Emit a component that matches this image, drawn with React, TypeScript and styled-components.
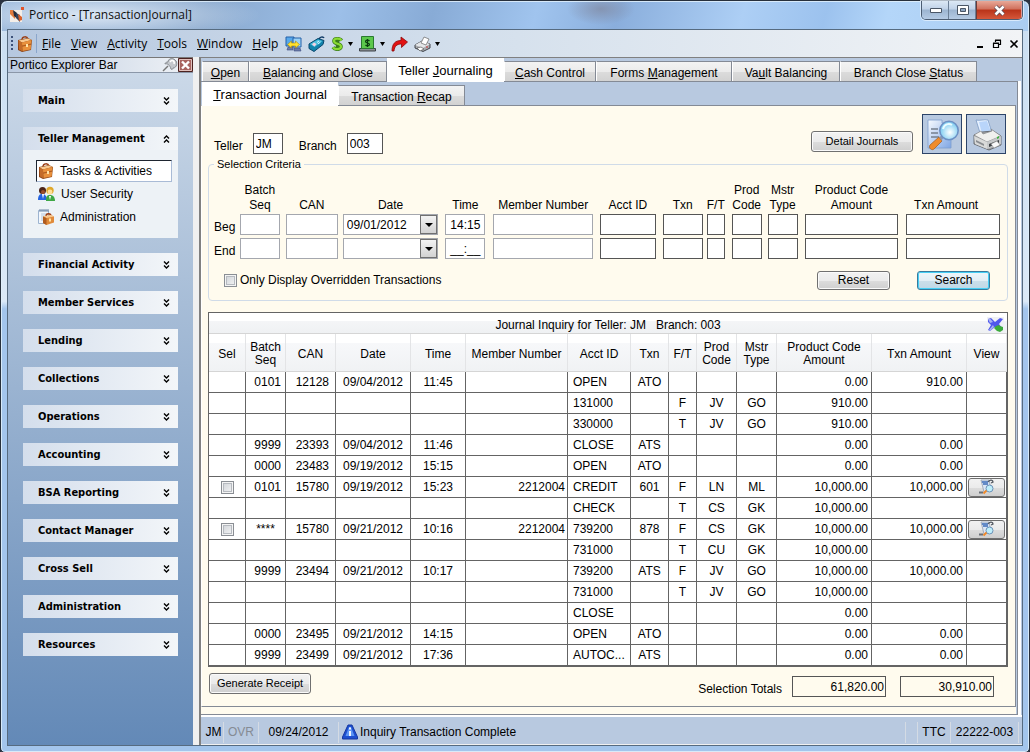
import React from "react";
import styled, { createGlobalStyle, css } from "styled-components";

const c = {
  steel: "#b8c9e0",
  cream: "#fffbee",
  edge: "#848a95",
  grid: "#646464",
  ink: "#000000",
};

const GlobalStyle = createGlobalStyle`
  * { box-sizing: border-box; }
  body { margin: 0; background: #2a3240; color: ${c.ink}; font-family: "Liberation Sans", Arial, sans-serif; font-size: 12px; line-height: 15px; }
  button, input, select { font: inherit; color: inherit; margin: 0; }
  svg { display: block; flex: none; }
`;

/* ---------- window frame ---------- */

const Frame = styled.div`
  min-height: 100vh;
  min-width: 960px;
  display: flex;
  flex-direction: column;
  padding: 0 6px 6px;
  border: 1px solid #27303c;
  border-radius: 7px 7px 5px 5px;
  background:
    radial-gradient(ellipse 170px 26px at 90px 14px, rgba(228, 237, 247, 0.9), rgba(228, 237, 247, 0) 100%) 0 0 / 100% 40px no-repeat,
    radial-gradient(ellipse 34px 16px at 600px 8px, rgba(128, 136, 160, 0.7), rgba(128, 136, 160, 0)) 0 0 / 100% 30px no-repeat,
    linear-gradient(105deg, #8fb0d6 0, #8aa9ce 200px, #9cbfe8 330px, #88abd6 420px, #a0c4ee 520px, #8aaedc 600px, #adcff5 720px, #9cc2ee 800px, #b4d6f9 860px, #a9cbf0 1020px) 0 0 / 100% 30px no-repeat,
    linear-gradient(#c9def2, #dbe9f7 40%, #a3c5ec 41%, #a3c5ec 100%);
  box-shadow: inset 0 0 0 1px rgba(225, 240, 252, 0.85);
`;

const TitleBar = styled.header`
  display: flex;
  height: 28px;
  align-items: center;
  padding-left: 2px;
  gap: 4px;
`;

const Title = styled.h1`
  margin: 0;
  flex: 1;
  font: 400 12px/16px "Open Sans", "Noto Sans", sans-serif;
  color: #101010;
`;

const Captions = styled.div`
  display: flex;
  align-self: flex-start;
  border: 1px solid #4c5d72;
  border-top: 0;
  border-radius: 0 0 5px 5px;
  overflow: hidden;
  box-shadow: 0 0 0 1px rgba(235, 245, 255, 0.7);
`;

const CaptionButton = styled.button<{ $close?: boolean }>`
  width: ${(p) => (p.$close ? 46 : 27)}px;
  height: 18px;
  padding: 0;
  border: 0;
  border-left: ${(p) => (p.$close ? "1px solid #6b3b38" : "0")};
  box-shadow: inset -1px 0 0 ${(p) => (p.$close ? "#d99" : "#6c7f96")};
  display: grid;
  place-items: center;
  background: ${(p) =>
    p.$close
      ? "linear-gradient(#e8a898 0, #d0705c 45%, #b93319 50%, #d5573a 100%)"
      : "linear-gradient(#dce8f5 0, #c0d2e8 45%, #9cb4d0 50%, #b5cbe4 100%)"};
`;

const Client = styled.div`
  flex: 1;
  display: flex;
  flex-direction: column;
  border: 1px solid #566b80;
  background: #f0f0f0;
`;

/* ---------- menu strip ---------- */

const MenuStrip = styled.nav`
  height: 27px;
  display: flex;
  align-items: center;
  padding: 0 3px 0 3px;
  background: linear-gradient(90deg, #b6c8e0, #d3dfec 45%, #f2f4f6);
  font-family: "Open Sans", "Noto Sans", sans-serif;
`;

const Grip = styled.span`
  width: 2px;
  height: 16px;
  margin-right: 4px;
  background: repeating-linear-gradient(#3c5078 0 2px, transparent 2px 4px);
`;

const MenuDivider = styled.span`
  width: 1px;
  height: 19px;
  margin-left: 3px;
  background: #8ba6cb;
`;

const MenuButton = styled.button`
  border: 0;
  background: none;
  padding: 0 5px;
  line-height: 20px;
`;

const Tools = styled.div`
  display: flex;
  align-items: center;
  gap: 6px;
  margin-left: 2px;
`;

const ToolButton = styled.button`
  display: flex;
  align-items: center;
  gap: 4px;
  padding: 0;
  border: 0;
  background: none;
`;

const ChildControls = styled.div`
  display: flex;
  gap: 7px;
  margin-left: auto;
`;

const ChildButton = styled.button`
  padding: 0;
  border: 0;
  background: none;
`;

/* ---------- explorer sidebar ---------- */

const Body = styled.div`
  flex: 1;
  display: grid;
  grid-template-columns: 185px minmax(0, 1fr);
  column-gap: 6px;
`;

const Sidebar = styled.aside`
  display: flex;
  flex-direction: column;
  background: linear-gradient(#cddae9, #6389b7);
`;

const SidebarHeader = styled.div`
  display: flex;
  align-items: center;
  height: 16px;
  padding-left: 2px;
  border-top: 1px solid #777;
  border-bottom: 1px solid #8b97a8;
  background: linear-gradient(90deg, #bccbe0, #eff2f6);
`;

const SidebarTitle = styled.h2`
  flex: 1;
  margin: 0;
  font-size: 12px;
  font-weight: 400;
`;

const IconButton = styled.button`
  padding: 0;
  border: 0;
  background: none;
`;

const Groups = styled.div`
  display: flex;
  flex-direction: column;
  gap: 15px;
  padding: 16px 15px 24px;
`;

const GroupHead = styled.button`
  width: 100%;
  height: 23px;
  display: flex;
  align-items: center;
  justify-content: space-between;
  padding: 0 8px 0 15px;
  border: 0;
  text-align: left;
  background: linear-gradient(90deg, #d4deec, #f3f6f9);
  font: 700 11px/15px "DejaVu Sans Condensed", "Noto Sans", sans-serif;
`;

const GroupBody = styled.div`
  display: flex;
  flex-direction: column;
  gap: 1px;
  padding: 10px 6px 10px 13px;
  background: #edf2f6;
`;

const GroupLink = styled.a<{ $on?: boolean }>`
  display: flex;
  align-items: center;
  gap: 6px;
  height: 22px;
  padding-left: 1px;
  border: 1px solid transparent;
  color: inherit;
  text-decoration: none;
  ${(p) =>
    p.$on &&
    css`
      background: #fff;
      border-color: #1e2530 #a9bbd6 #a9bbd6 #1e2530;
    `}
`;

/* ---------- tabs and panels ---------- */

const Main = styled.main`
  display: flex;
  flex-direction: column;
  border-left: 2px solid #808080;
  border-top: 1px solid #808080;
  background: ${c.steel};
`;

const TabList = styled.div`
  display: flex;
  align-items: flex-end;
  height: 23px;
  padding-left: 1px;
`;

const Tab = styled.button<{ $on?: boolean; $w: number }>`
  width: ${(p) => p.$w}px;
  height: ${(p) => (p.$on ? 24 : 20)}px;
  margin-bottom: ${(p) => (p.$on ? -1 : 0)}px;
  padding: ${(p) => (p.$on ? "0 0 1px" : "3px 0 0")};
  border: 1px solid ${(p) => (p.$on ? "#fff" : c.edge)};
  border-bottom: 0;
  border-left-color: #fff;
  white-space: nowrap;
  position: relative;
  font-size: ${(p) => (p.$on ? 13 : 12)}px;
  background: ${(p) => (p.$on ? "#fff" : "linear-gradient(#f3f3f3, #ebebeb 50%, #dcdcdc 51%, #d2d2d2)")};
`;

const OuterPanel = styled.section`
  flex: 1;
  display: flex;
  flex-direction: column;
  margin-right: 4px;
  padding-right: 1px;
  border: 1px solid ${c.edge};
  border-left: 0;
  box-shadow: 3px 0 0 #fff;
`;

const InnerPanel = styled.section`
  flex: 1;
  display: flex;
  flex-direction: column;
  padding: 8px 7px 9px 6px;
  border: 1px solid ${c.edge};
  border-left: 1px solid #fff;
  background: ${c.cream};
`;

const PanelSkirt = styled.div`
  height: 7px;
  background: ${c.cream};
`;

/* ---------- form ---------- */

const TopRow = styled.div`
  display: flex;
  align-items: center;
  height: 40px;
  padding: 0 2px 0 6px;
`;

const TopField = styled.label`
  display: flex;
  align-items: center;
  gap: 10px;
  margin: 19px 16px 0 0;
`;

const TopCaption = styled.span`
  padding-top: 6px;
`;

const field = css<{ $soft?: boolean }>`
  width: 100%;
  height: 21px;
  border: 1px solid ${(p) => (p.$soft ? "#a4a7ae" : "#555")};
  border-radius: 0;
  outline: 0;
  background: #fff;
`;

const TextBox = styled.input<{ $soft?: boolean; $w?: number; $center?: boolean }>`
  ${field}
  ${(p) => p.$w && `width: ${p.$w}px;`}
  padding: 0 ${(p) => (p.$center ? 0 : 2)}px;
  text-align: ${(p) => (p.$center ? "center" : "left")};
`;

const Push = styled.button<{ $w: number; $tall?: boolean; $default?: boolean }>`
  width: ${(p) => p.$w}px;
  height: ${(p) => (p.$tall ? 21 : 19)}px;
  padding: 0;
  white-space: nowrap;
  font-size: ${(p) => (p.$tall ? 11 : 12)}px;
  border: 1px solid ${(p) => (p.$default ? "#3a7a9c" : "#707070")};
  border-radius: 3px;
  box-shadow: inset 0 0 0 1px ${(p) => (p.$default ? "#46cff5" : "#fafafa")};
  background: ${(p) =>
    p.$default
      ? "linear-gradient(#eef6fa, #e2eef5 50%, #cbdfea 51%, #c0d8e6)"
      : "linear-gradient(#f2f2f2, #ebebeb 50%, #dddddd 51%, #cfcfcf)"};
`;

const TopActions = styled.div`
  display: flex;
  align-items: flex-end;
  gap: 4px;
  margin-left: auto;
`;

const DetailSlot = styled.div`
  padding: 0 5px 2px 0;
`;

const BigButton = styled.button`
  width: 40px;
  height: 40px;
  padding: 0;
  display: grid;
  place-items: center;
  border: 1px solid #2d4468;
  background: ${c.steel};
`;

const Criteria = styled.fieldset`
  min-width: 0;
  margin: 3px 0 0;
  padding: 13px 7px 10px 5px;
  border: 1px solid #d0dbe8;
  border-radius: 4px;
`;

const Legend = styled.legend`
  padding: 0 3px;
  font-size: 11px;
  line-height: 15px;
`;

const CriteriaGrid = styled.div`
  display: grid;
  grid-template-columns: 22px 42fr 53fr 99fr 44fr 103fr 59fr 40fr 19fr 32fr 33fr 98fr 94fr;
  row-gap: 3px;
  column-gap: 4px;
`;

const Head = styled.span<{ $trim: number }>`
  display: flex;
  align-items: flex-end;
  justify-content: center;
  height: 28px;
  margin: 0 ${(p) => p.$trim}px -2px 0;
  text-align: center;
  white-space: pre;
  line-height: 15px;
`;

const RowLabel = styled.span`
  align-self: end;
  white-space: nowrap;
`;

const Slot = styled.span<{ $trim: number }>`
  position: relative;
  padding-right: ${(p) => p.$trim}px;
  min-width: 0;
`;

const DateBox = styled.select<{ $soft?: boolean }>`
  ${field}
  appearance: none;
  padding: 2px 18px 0 3px;
`;

const DropMark = styled.span<{ $trim: number }>`
  position: absolute;
  top: 1px;
  right: ${(p) => p.$trim + 1}px;
  width: 17px;
  height: 19px;
  display: grid;
  place-items: center;
  pointer-events: none;
  border: 1px solid #707070;
  background: linear-gradient(#f3f3f3, #d2d2d2);
`;

const CriteriaFoot = styled.div`
  display: flex;
  align-items: center;
  margin-top: 12px;
  padding: 0 10px;
`;

const CheckLabel = styled.label`
  display: flex;
  align-items: center;
  gap: 3px;
`;

const Check = styled.input.attrs({ type: "checkbox" })`
  appearance: none;
  display: block;
  width: 13px;
  height: 13px;
  margin: 0;
  border: 1px solid #8a8e94;
  box-shadow: inset 0 0 0 1px #f4f4f4, inset 0 0 0 2px #b6bac0;
  background: linear-gradient(135deg, #cdd1d6, #f6f6f6);
`;

const FootButtons = styled.div`
  display: flex;
  gap: 27px;
  margin-left: auto;
`;

/* ---------- journal table ---------- */

const TableBox = styled.div`
  margin-top: 11px;
  border: 1px solid ${c.grid};
  background: #fff;
`;

const TableTitle = styled.div`
  position: relative;
  height: 21px;
  line-height: 24px;
  text-align: center;
  white-space: pre;
  border-bottom: 1px solid #d5d5d5;
  background: linear-gradient(#fff 40%, #f4f5f7 41%, #eff1f3);
`;

const CustomizeButton = styled.button`
  position: absolute;
  top: 4px;
  right: 3px;
  padding: 0;
  border: 0;
  background: #f0f1f4;
`;

const Journal = styled.table`
  width: 100%;
  table-layout: fixed;
  border-collapse: separate;
  border-spacing: 0;
`;

const Th = styled.th`
  height: 38px;
  padding: 3px 0 0;
  font-weight: 400;
  line-height: 13px;
  white-space: pre;
  border-right: 1px solid #e3e4e6;
  border-bottom: 1px solid #d5d5d5;
  background: linear-gradient(#fff 24%, #f7f8fa 25%, #f0f2f4);
`;

const Td = styled.td<{ $align: "left" | "center" | "right"; $pad: number }>`
  height: 21px;
  padding: 0 ${(p) => (p.$align === "center" ? 0 : p.$pad)}px;
  text-align: ${(p) => p.$align};
  overflow: hidden;
  white-space: nowrap;
  text-overflow: ellipsis;
  border-right: 1px solid ${c.grid};
  border-bottom: 1px solid ${c.grid};

  ${Check} { margin: 0 auto; }
`;

const ViewButton = styled.button`
  display: grid;
  place-items: center;
  width: 37px;
  height: 19px;
  margin: 0 auto;
  padding: 0;
  border: 1px solid #707070;
  border-radius: 3px;
  background: linear-gradient(#f2f2f2, #ebebeb 50%, #dddddd 51%, #cfcfcf);
`;

const Totals = styled.div`
  display: flex;
  align-items: flex-start;
  gap: 14px;
  margin-top: 6px;
  padding: 0 14px 0 1px;
`;

const TotalsLabel = styled.label`
  display: flex;
  align-items: flex-end;
  gap: 10px;
  margin: 3px 0 0 auto;
`;

const TotalBox = styled.input`
  ${field}
  width: 94px;
  padding: 0 1px 0 0;
  text-align: right;
  background: ${c.cream};
`;

const TotalSlot = styled.div`
  margin-top: 3px;
`;

/* ---------- status bar ---------- */

const Status = styled.footer`
  display: flex;
  align-items: center;
  height: 30px;
  padding: 3px 3px 0 3px;
  border-top: 2px solid #fff;
  border-bottom: 1px solid #f0f0f0;
`;

const StatusCell = styled.span<{ $w?: number; $dim?: boolean }>`
  display: flex;
  align-items: center;
  justify-content: center;
  height: 21px;
  ${(p) => p.$w && `width: ${p.$w}px;`}
  border-right: 1px solid #d4dbe4;
  color: ${(p) => (p.$dim ? "#858b94" : "inherit")};
`;

const StatusText = styled.span`
  flex: 1;
  display: flex;
  align-items: center;
  gap: 2px;
  height: 21px;
  padding-left: 3px;
  border-right: 1px solid #d4dbe4;
`;

/* ---------- drawings ---------- */

const AppLogo = () => (
  <svg width="16" height="16" viewBox="0 0 16 16">
    <path d="M1 3h12v12H1z" fill="#f3eee8" />
    <path d="M1 3h3l3 4-1 5-5-5z" fill="#e07a3c" />
    <path d="M4 3l4 3 1 6-4-3z" fill="#222c3c" />
    <path d="M7 6l4 2v7l-4-4z" fill="#33425a" />
    <path d="M9 7l4 3v3l-3 1z" fill="#d9612a" />
    <path d="M12 0h3v3h-3z" fill="#e2542b" />
  </svg>
);

const Briefcase = () => (
  <svg width="16" height="16" viewBox="0 0 16 16">
    <path d="M5 4c0-4 5-4 6-1" fill="none" stroke="#9a3d14" strokeWidth="1.500" />
    <path d="M1 4l10-2 4 2-1 10-9 2-4-2z" fill="#8e4415" />
    <path d="M1.500 4.500L11 2.500l3.500 1.500L5 6.500z" fill="#f8c890" />
    <path d="M5 6.500l9.500-2.500-.8 9.500L5.500 15z" fill="#e8903c" />
    <path d="M1.500 4.500L5 6.500V15l-3-1.500z" fill="#c46a28" />
    <path d="M5 9.500l9-2v1.200l-9 2z" fill="#b05c20" />
    <path d="M9 8h2v3H9z" fill="#ffe3a6" />
  </svg>
);

const Users = () => (
  <svg width="17" height="16" viewBox="0 0 17 16">
    <path d="M0 14c0-5 2-6 4-6s5 1 5 6z" fill="#2464e0" />
    <path d="M4 8h2l-1 5z" fill="#fff" />
    <circle cx="4.500" cy="4.500" r="3.500" fill="#4b2418" />
    <circle cx="5" cy="6" r="2" fill="#9c4e2c" />
    <path d="M8 15c0-5 1-6 4-6s5 2 5 6z" fill="#3fa845" />
    <circle cx="12" cy="4.500" r="3.700" fill="#e0a82c" />
    <circle cx="12" cy="6" r="2.400" fill="#ffdf98" />
    <path d="M11 10h2l-1 4z" fill="#fff" />
  </svg>
);

const AdminDoc = () => (
  <svg width="16" height="16" viewBox="0 0 16 16">
    <path d="M.5 1.500h10v13H.5z" fill="#f2f7fd" stroke="#9db4d0" />
    <path d="M2 0v3M4 0v3M6 0v3M8 0v3M10 0v3" stroke="#6f87a6" />
    <path d="M3 5h6M3 7h4M3 9h3M3 11h2" stroke="#b4c6dc" />
    <path d="M8 7c0-3 5-3 5 0" fill="none" stroke="#9a3d14" strokeWidth="1.300" />
    <path d="M5 7.500l8-1.500 3 1.500v6L8.500 16 5 14z" fill="#e08a3a" />
    <path d="M5 7.500L13 6l3 1.500L8.500 9z" fill="#f8c890" />
    <path d="M5 7.500L8.500 9v7L5 14z" fill="#b05c20" />
    <path d="M11 9.500h2v3h-2z" fill="#ffe3a6" />
  </svg>
);

const Screens = () => (
  <svg width="17" height="16" viewBox="0 0 17 16">
    <path d="M1 1h8v9H1z" fill="#58a8ea" stroke="#2460a8" />
    <path d="M8 2h8v9H8z" fill="#9cd2f6" stroke="#2460a8" />
    <path d="M3 11h5v3H2zM9 12h6l1 3H9z" fill="#6c7ca8" stroke="#3c4c80" strokeWidth=".6" />
    <path d="M2.500 8.500L6.500 5v2h4V5l4 3.500-4 3.500v-2h-4v2z" fill="#ffe22e" stroke="#a88410" strokeWidth=".6" />
  </svg>
);

const PhoneTag = () => (
  <svg width="17" height="16" viewBox="0 0 17 16">
    <path d="M11 4c0-3 4-4 5-2" fill="none" stroke="#123c66" strokeWidth="1.500" />
    <path d="M1 8l9-5.500 6 2-1 4-9 7-5-3z" fill="#1283ac" stroke="#0a466c" />
    <path d="M2 8l8-4.500 4.500 1.500L6.500 11z" fill="#4cc0de" />
    <path d="M4 8.500L6 6.500 8.500 8l-2 2.500z" fill="#f9cfe0" />
    <path d="M9 6.500l2-1.500M10 8l2.500-2" stroke="#d6f4ff" />
  </svg>
);

const Dollar = () => (
  <svg width="13" height="16" viewBox="0 0 13 16">
    <path d="M10.500 4.500C9 2 3 2 3 5c0 3.500 7 2 7 5.500 0 3-6 3.500-8 .8M6.500 1v14" fill="none" stroke="#3a7c1a" strokeWidth="3.600" />
    <path d="M10.500 4.500C9 2 3 2 3 5c0 3.500 7 2 7 5.500 0 3-6 3.500-8 .8" fill="none" stroke="#8cdc34" strokeWidth="2.200" />
  </svg>
);

const CashSlip = () => (
  <svg width="17" height="16" viewBox="0 0 17 16">
    <path d="M.5 12.500h16v2.500H.5z" fill="#8b9094" stroke="#3c4248" />
    <path d="M2.500.5h12v12h-12z" fill="#5cc84c" stroke="#2a7a30" />
    <path d="M10.500 5C9 3.500 6.500 4 6.500 5.500c0 2 4 1 4 3 0 1.600-3 1.700-4 .5M8.500 3v8" fill="none" stroke="#0b3c10" strokeWidth="1.200" />
  </svg>
);

const RedArrow = () => (
  <svg width="17" height="16" viewBox="0 0 17 16">
    <path d="M1 15C1 8 4 4.500 10 4.500V1l6.500 5-6 5.500V8C6 8 3.500 10 3 15z" fill="#e21212" stroke="#8d0909" strokeWidth=".8" />
  </svg>
);

const SmallPrinter = () => (
  <svg width="17" height="16" viewBox="0 0 17 16">
    <path d="M1 9l7-4 8 3v4l-7 3.500L1 12z" fill="#a9acb0" stroke="#33373c" strokeWidth=".9" />
    <path d="M1 9l7-4 8 3-7 4z" fill="#e4e6e8" />
    <path d="M7 7l3-6 5 2-3 6z" fill="#fff" stroke="#666" strokeWidth=".7" />
    <path d="M3 12l4-1 3 2-4 2z" fill="#fff" stroke="#444" strokeWidth=".6" />
    <path d="M12 11h2" stroke="#c33" />
  </svg>
);

const Caret = ({ w = 5 }: { w?: number }) => (
  <svg width={w} height="4" viewBox="0 0 8 4" preserveAspectRatio="none">
    <path d="M0 0h8L4 4z" fill="#000" />
  </svg>
);

const Chevrons = ({ up }: { up?: boolean }) => (
  <svg width="7" height="8" viewBox="0 0 7 8">
    <path
      d={up ? "M1 3.500L3.500 1 6 3.500M1 7.500L3.500 5 6 7.500" : "M1 .5L3.500 3 6 .5M1 4.500L3.500 7 6 4.500"}
      fill="none"
      stroke="#000"
      strokeWidth="1.400"
    />
  </svg>
);

const Pin = () => (
  <svg width="16" height="14" viewBox="0 0 16 14">
    <path d="M1 13l5-5" stroke="#777" strokeWidth="1.500" />
    <path d="M3 6c2-1 5 1 6 5 1 1 2 0 2-1 4 0 5-6 2-8C10-1 6 1 6 4 4 4 3 5 3 6z" fill="#c3c7cc" stroke="#85898e" />
    <path d="M8 4c2-3 5-1 4 2" fill="none" stroke="#fff" strokeWidth="1.500" />
  </svg>
);

const CloseBox = () => (
  <svg width="15" height="14" viewBox="0 0 15 14">
    <path d="M.5.5h14v13H.5z" fill="#a86460" stroke="#4c2220" />
    <path d="M1.500 1.500h12v11h-12z" fill="none" stroke="#e0c0bc" />
    <path d="M4 3.500l7 7M11 3.500l-7 7" stroke="#fff" strokeWidth="2.400" />
  </svg>
);

const FindDoc = () => (
  <svg width="34" height="34" viewBox="0 0 34 34">
    <defs>
      <linearGradient id="sheet" x2="1" y2="1">
        <stop stopColor="#f8fbff" />
        <stop offset="1" stopColor="#7fa6e4" />
      </linearGradient>
      <radialGradient id="lens" cx=".55" cy=".6">
        <stop stopColor="#ffffff" />
        <stop offset="1" stopColor="#86d0f2" />
      </radialGradient>
    </defs>
    <path d="M3 3h14v3h9v25H3z" fill="url(#sheet)" stroke="#7f9fce" strokeWidth=".8" />
    <path d="M6 12h7M6 16h7M6 20h8" stroke="#76808f" strokeWidth="1.500" />
    <path d="M14 20l3 4-8 8c-2 2-6-1-4-4z" fill="#f08c2c" stroke="#a4642c" strokeWidth=".8" />
    <path d="M14 20l3-1.500 1.500 2.500-2 2.500z" fill="#8c98b0" />
    <circle cx="24" cy="13.500" r="9.200" fill="url(#lens)" stroke="#6c90c4" strokeWidth="1.600" />
    <path d="M18 12c1-5 6-6 9-4" fill="none" stroke="#e9fbff" strokeWidth="2" />
  </svg>
);

const Printer = () => (
  <svg width="34" height="34" viewBox="0 0 34 34">
    <path d="M7 3c4 1 8-1 12 0l4 13-11 3z" fill="#e6f1ff" stroke="#7c9ac4" strokeWidth=".8" />
    <path d="M10 5l8-1 4 11-9 2z" fill="#b9d5fa" />
    <path d="M5 18l8-3 11-1 8 5v9l-12 5L5 27z" fill="#a6a8aa" stroke="#55585c" strokeWidth=".8" />
    <path d="M5 18l7-4 2 3 9-3-1-2 10 7-14 6z" fill="#f0f0ee" stroke="#77797c" strokeWidth=".6" />
    <path d="M5 19l13 6v7L6 27z" fill="#d9dad9" />
    <path d="M7 23l8 4v2l-8-4z" fill="#8a8d90" />
    <path d="M18 25l14-6v8l-14 5z" fill="#c6c8c9" />
    <path d="M20 27l10-4v3l-10 4z" fill="#3e4145" />
    <path d="M22 27l6-3 3 4-6 3z" fill="#fafafa" stroke="#888" strokeWidth=".5" />
    <path d="M28 20l2-1v2l-2 1z" fill="#3fae3f" />
  </svg>
);

const ViewGlyph = () => (
  <svg width="17" height="16" viewBox="0 0 17 16">
    <path d="M3 1h8l2 9-7 3z" fill="#dbe6f5" stroke="#8894a6" strokeWidth=".7" />
    <path d="M4 3h6M5 5h5" stroke="#3c6cb8" strokeWidth="1.400" />
    <path d="M10 3c2-3 5-2 5 0l-2 1" fill="none" stroke="#555b63" strokeWidth="1.300" />
    <circle cx="11.500" cy="9.500" r="3.500" fill="#bfeefa" stroke="#6c92b8" />
    <path d="M8.500 11.500l-3 3" stroke="#f08a2a" strokeWidth="2" />
    <path d="M1 13.500h4" stroke="#6a7078" strokeWidth="2" />
  </svg>
);

const Customize = () => (
  <svg width="17" height="16" viewBox="0 0 17 16">
    <path d="M1 2l3-1 4 4 5-4 3 1-4 5 3 4-3 2-4-3-5 4-2-1 3-5-3-3z" fill="#4f57ee" />
    <path d="M1 2l2-.5L6 5 3 6zM2 13l4-5 1 2-4 4z" fill="#a9b2f4" />
    <path d="M7 11l2-2 3-1 1 1 3 1v3l-3 2-3-1z" fill="#3cab3c" />
  </svg>
);

const InfoTriangle = () => (
  <svg width="16" height="16" viewBox="0 0 16 16">
    <path d="M6 1h4l5.500 12v2H.5v-2z" fill="#1d4fd0" stroke="#1739a0" />
    <path d="M7 3h2l3.500 9h-9z" fill="#5c95f5" />
    <path d="M8 3.500v2M8 7v5" stroke="#fff" strokeWidth="1.800" />
  </svg>
);

/* ---------- data ---------- */

/* text before the access key, the key itself, text after it */
type Key = [string, string, string];
const K = ({ k }: { k: Key }) => (
  <>
    {k[0]}
    <u>{k[1]}</u>
    {k[2]}
  </>
);

const menus: Key[] = [["", "F", "ile"], ["", "V", "iew"], ["", "A", "ctivity"], ["", "T", "ools"], ["", "W", "indow"], ["", "H", "elp"]];

const tools = [
  { name: "Workstation", Icon: Screens },
  { name: "Lookup", Icon: PhoneTag },
  { name: "Currency", Icon: Dollar, menu: true },
  { name: "Cash", Icon: CashSlip, menu: true },
  { name: "Forward", Icon: RedArrow },
  { name: "Print", Icon: SmallPrinter, menu: true },
];

const groups = [
  "Main", "Teller Management", "Financial Activity", "Member Services", "Lending", "Collections", "Operations",
  "Accounting", "BSA Reporting", "Contact Manager", "Cross Sell", "Administration", "Resources",
];

const tabs: { k: Key; w: number; on?: boolean }[] = [
  { k: ["", "O", "pen"], w: 47 },
  { k: ["", "B", "alancing and Close"], w: 138 },
  { k: ["Teller ", "J", "ournaling"], w: 117, on: true },
  { k: ["", "C", "ash Control"], w: 92 },
  { k: ["Forms ", "M", "anagement"], w: 136 },
  { k: ["Va", "u", "lt Balancing"], w: 108 },
  { k: ["Branch Close ", "S", "tatus"], w: 137 },
];

const criteria = [
  { label: "Batch\nSeq", trim: 2, soft: true },
  { label: "CAN", trim: 1, soft: true },
  { label: "Date", trim: 3, soft: true, date: true },
  { label: "Time", trim: 4, soft: true, time: true },
  { label: "Member Number", trim: 3, soft: true },
  { label: "Acct ID", trim: 3 },
  { label: "Txn", trim: 0 },
  { label: "F/T", trim: 3 },
  { label: "Prod\nCode", trim: 2 },
  { label: "Mstr\nType", trim: 3 },
  { label: "Product Code\nAmount", trim: 4 },
  { label: "Txn Amount", trim: 14 },
];

const columns: { label: string; w: number; align?: "left" | "right"; pad?: number }[] = [
  { label: "Sel", w: 37 },
  { label: "Batch\nSeq", w: 40, align: "right", pad: 4 },
  { label: "CAN", w: 50, align: "right", pad: 6 },
  { label: "Date", w: 75 },
  { label: "Time", w: 55 },
  { label: "Member Number", w: 102, align: "right", pad: 2 },
  { label: "Acct ID", w: 63, align: "left", pad: 5 },
  { label: "Txn", w: 38 },
  { label: "F/T", w: 28 },
  { label: "Prod\nCode", w: 40 },
  { label: "Mstr\nType", w: 40 },
  { label: "Product Code\nAmount", w: 95, align: "right", pad: 3 },
  { label: "Txn Amount", w: 95, align: "right", pad: 3 },
  { label: "View", w: 40 },
];

const rows = [
  "|0101|12128|09/04/2012|11:45||OPEN|ATO||||0.00|910.00|",
  "||||||131000||F|JV|GO|910.00||",
  "||||||330000||T|JV|GO|910.00||",
  "|9999|23393|09/04/2012|11:46||CLOSE|ATS||||0.00|0.00|",
  "|0000|23483|09/19/2012|15:15||OPEN|ATO||||0.00|0.00|",
  "x|0101|15780|09/19/2012|15:23|2212004|CREDIT|601|F|LN|ML|10,000.00|10,000.00|x",
  "||||||CHECK||T|CS|GK|10,000.00||",
  "x|****|15780|09/21/2012|10:16|2212004|739200|878|F|CS|GK|10,000.00|10,000.00|x",
  "||||||731000||T|CU|GK|10,000.00||",
  "|9999|23494|09/21/2012|10:17||739200|ATS|F|JV|GO|10,000.00|10,000.00|",
  "||||||731000||T|JV|GO|10,000.00||",
  "||||||CLOSE|||||0.00||",
  "|0000|23495|09/21/2012|14:15||OPEN|ATO||||0.00|0.00|",
  "|9999|23499|09/21/2012|17:36||AUTOC...|ATS||||0.00|0.00|",
].map((r) => r.split("|"));

const CriteriaRow = ({ label, date, time }: { label: string; date: string; time: string }) => (
  <>
    <RowLabel>{label}</RowLabel>
    {criteria.map((f) => {
      const name = `${label} ${f.label.replace("\n", " ")}`;
      return (
        <Slot key={f.label} $trim={f.label === "Txn Amount" ? 0 : f.trim}>
          {f.date ? (
            <>
              <DateBox $soft aria-label={name} defaultValue={date}>
                <option>{date}</option>
              </DateBox>
              <DropMark $trim={f.trim}>
                <Caret w={8} />
              </DropMark>
            </>
          ) : (
            <TextBox $soft={f.soft} $center={f.time} aria-label={name} defaultValue={f.time ? time : ""} />
          )}
        </Slot>
      );
    })}
  </>
);

export default function App() {
  return (
    <Frame>
      <GlobalStyle />
      <TitleBar>
        <AppLogo />
        <Title>Portico - [TransactionJournal]</Title>
        <Captions>
          <CaptionButton aria-label="Minimize">
            <svg width="12" height="5" viewBox="0 0 12 5">
              <path d="M.5.5h11v4H.5z" fill="#fff" stroke="#4a5666" />
            </svg>
          </CaptionButton>
          <CaptionButton aria-label="Maximize">
            <svg width="12" height="10" viewBox="0 0 12 10">
              <path d="M.5.5h11v9H.5z" fill="#fff" stroke="#4a5666" />
              <path d="M3.500 3.500h5v3h-5z" fill="#8fa6c2" stroke="#4a5666" />
            </svg>
          </CaptionButton>
          <CaptionButton $close aria-label="Close">
            <svg width="13" height="11" viewBox="0 0 13 11">
              <path d="M2.500 1.500l8 8M10.500 1.500l-8 8" stroke="#5b4a55" strokeWidth="4.200" />
              <path d="M2.500 1.500l8 8M10.500 1.500l-8 8" stroke="#fff" strokeWidth="2.600" />
            </svg>
          </CaptionButton>
        </Captions>
      </TitleBar>
      <Client>
        <MenuStrip>
          <Grip />
          <Briefcase />
          <MenuDivider />
          {menus.map((m) => (
            <MenuButton key={m[1]}>
              <K k={m} />
            </MenuButton>
          ))}
          <Tools>
            {tools.map(({ name, Icon, menu }) => (
              <ToolButton key={name} aria-label={name}>
                <Icon />
                {menu && <Caret />}
              </ToolButton>
            ))}
          </Tools>
          <ChildControls>
            <ChildButton aria-label="Minimize child">
              <svg width="10" height="10" viewBox="0 0 10 10">
                <path d="M2 7h6v2H2z" />
              </svg>
            </ChildButton>
            <ChildButton aria-label="Restore child">
              <svg width="10" height="10" viewBox="0 0 10 10">
                <path d="M3.500 3V1.500h5v4H7M3 1h6M1.500 4.500h5v4h-5zM1 4h6" fill="none" stroke="#000" strokeWidth="1.200" />
              </svg>
            </ChildButton>
            <ChildButton aria-label="Close child">
              <svg width="10" height="10" viewBox="0 0 10 10">
                <path d="M1.500 1.500l7 7M8.500 1.500l-7 7" stroke="#000" strokeWidth="1.600" />
              </svg>
            </ChildButton>
          </ChildControls>
        </MenuStrip>
        <Body>
          <Sidebar>
            <SidebarHeader>
              <SidebarTitle>Portico Explorer Bar</SidebarTitle>
              <IconButton aria-label="Pin">
                <Pin />
              </IconButton>
              <IconButton aria-label="Close explorer bar">
                <CloseBox />
              </IconButton>
            </SidebarHeader>
            <Groups>
              {groups.map((g) => {
                const open = g === "Teller Management";
                return (
                  <div key={g}>
                    <GroupHead aria-expanded={open}>
                      {g}
                      <Chevrons up={open} />
                    </GroupHead>
                    {open && (
                      <GroupBody>
                        <GroupLink $on href="#tasks">
                          <Briefcase />
                          Tasks &amp; Activities
                        </GroupLink>
                        <GroupLink href="#security">
                          <Users />
                          User Security
                        </GroupLink>
                        <GroupLink href="#administration">
                          <AdminDoc />
                          Administration
                        </GroupLink>
                      </GroupBody>
                    )}
                  </div>
                );
              })}
            </Groups>
          </Sidebar>
          <Main>
            <TabList role="tablist">
              {tabs.map((t) => (
                <Tab key={t.k.join("")} role="tab" aria-selected={!!t.on} $on={t.on} $w={t.w}>
                  <K k={t.k} />
                </Tab>
              ))}
            </TabList>
            <OuterPanel>
              <TabList role="tablist">
                <Tab role="tab" aria-selected $on $w={136}>
                  <K k={["", "T", "ransaction Journal"]} />
                </Tab>
                <Tab role="tab" aria-selected={false} $w={127}>
                  <K k={["Transaction ", "R", "ecap"]} />
                </Tab>
              </TabList>
              <InnerPanel>
                <TopRow>
                  <TopField>
                    <TopCaption>Teller</TopCaption>
                    <TextBox $w={30} defaultValue="JM" />
                  </TopField>
                  <TopField>
                    <TopCaption>Branch</TopCaption>
                    <TextBox $w={36} defaultValue="003" />
                  </TopField>
                  <TopActions>
                    <DetailSlot>
                      <Push $tall $w={102}>Detail Journals</Push>
                    </DetailSlot>
                    <BigButton aria-label="Preview">
                      <FindDoc />
                    </BigButton>
                    <BigButton aria-label="Print journal">
                      <Printer />
                    </BigButton>
                  </TopActions>
                </TopRow>
                <Criteria>
                  <Legend>Selection Criteria</Legend>
                  <CriteriaGrid>
                    <span />
                    {criteria.map((f) => (
                      <Head key={f.label} $trim={f.trim}>
                        {f.label}
                      </Head>
                    ))}
                    <CriteriaRow label="Beg" date="09/01/2012" time="14:15" />
                    <CriteriaRow label="End" date="" time="__:__" />
                  </CriteriaGrid>
                  <CriteriaFoot>
                    <CheckLabel>
                      <Check />
                      Only Display Overridden Transactions
                    </CheckLabel>
                    <FootButtons>
                      <Push $w={73}>Reset</Push>
                      <Push $w={73} $default>
                        Search
                      </Push>
                    </FootButtons>
                  </CriteriaFoot>
                </Criteria>
                <TableBox>
                  <TableTitle id="journal-title">
                    {"Journal Inquiry for Teller: JM   Branch: 003"}
                    <CustomizeButton aria-label="Customize">
                      <Customize />
                    </CustomizeButton>
                  </TableTitle>
                  <Journal aria-labelledby="journal-title">
                    <colgroup>
                      {columns.map((col) => (
                        <col key={col.label} width={col.w} />
                      ))}
                    </colgroup>
                    <thead>
                      <tr>
                        {columns.map((col) => (
                          <Th key={col.label}>{col.label}</Th>
                        ))}
                      </tr>
                    </thead>
                    <tbody>
                      {rows.map((r, i) => (
                        <tr key={i}>
                          {r.map((v, j) => (
                            <Td key={j} $align={v === "****" ? "center" : columns[j].align ?? "center"} $pad={columns[j].pad ?? 0}>
                              {v === "x" && j === 0 ? (
                                <Check aria-label={`Select row ${i + 1}`} />
                              ) : v === "x" ? (
                                <ViewButton aria-label={`View row ${i + 1}`}>
                                  <ViewGlyph />
                                </ViewButton>
                              ) : (
                                v
                              )}
                            </Td>
                          ))}
                        </tr>
                      ))}
                    </tbody>
                  </Journal>
                </TableBox>
                <Totals>
                  <Push $tall $w={102}>Generate Receipt</Push>
                  <TotalsLabel>
                    Selection Totals
                    <TotalBox readOnly value="61,820.00" />
                  </TotalsLabel>
                  <TotalSlot>
                    <TotalBox readOnly aria-label="Transaction total" value="30,910.00" />
                  </TotalSlot>
                </Totals>
              </InnerPanel>
              <PanelSkirt />
            </OuterPanel>
            <Status>
              <StatusCell $w={20}>JM</StatusCell>
              <StatusCell $w={35} $dim>OVR</StatusCell>
              <StatusCell $w={80}>09/24/2012</StatusCell>
              <StatusText>
                <InfoTriangle />
                Inquiry Transaction Complete
              </StatusText>
              <StatusCell $w={12} />
              <StatusCell $w={33}>TTC</StatusCell>
              <StatusCell $w={68}>22222-003</StatusCell>
            </Status>
          </Main>
        </Body>
      </Client>
    </Frame>
  );
}
